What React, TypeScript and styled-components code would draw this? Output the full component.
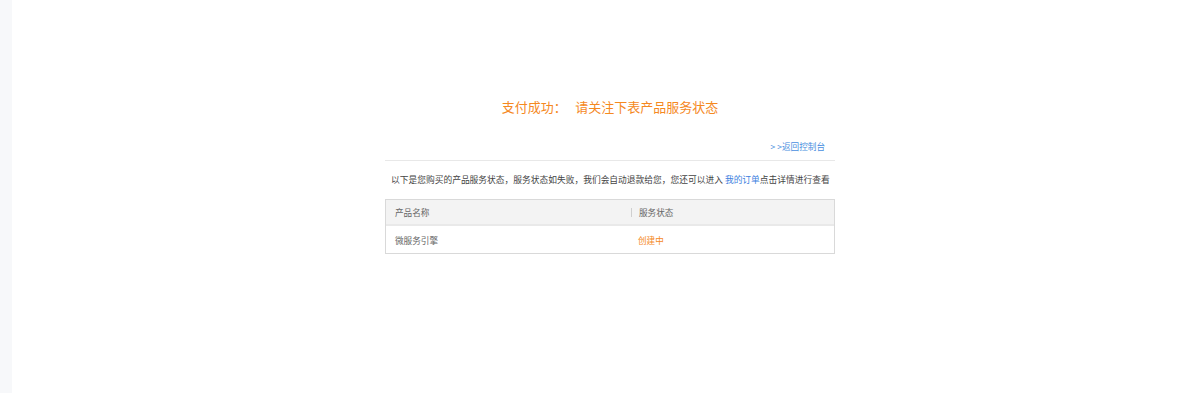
import styled, { createGlobalStyle } from 'styled-components'

const GlobalStyle = createGlobalStyle`
	html, body {
		margin: 0;
		padding: 0;
		background: #ffffff;
		font-family: 'Noto Sans CJK SC', 'Liberation Sans', sans-serif;
	}
`

const Page = styled.div`
	display: flex;
	width: 1198px;
	height: 393px;
	overflow: hidden;
`

const SideStrip = styled.div`
	width: 12px;
	flex-shrink: 0;
	background: #f7f8fa;
`

const Main = styled.div`
	flex: 1;
	display: flex;
	justify-content: center;
	padding-left: 10px;
`

const Content = styled.div`
	width: 450px;
	display: flex;
	flex-direction: column;
`

const Title = styled.h2`
	margin: 98px 0 0;
	font-size: 13px;
	line-height: 18px;
	font-weight: 400;
	color: #f5891f;
	text-align: center;
	white-space: pre;
`

const BackRow = styled.div`
	display: flex;
	justify-content: flex-end;
	padding: 24px 10px 8px 0;
	border-bottom: 1px solid #e8e8e8;
`

const BackLink = styled.a`
	font-size: 8.6px;
	line-height: 12px;
	color: #4a8fe0;
	text-decoration: none;
	cursor: pointer;
`

const Notice = styled.p`
	margin: 13px 0 0;
	padding-left: 6px;
	font-size: 8.74px;
	line-height: 12px;
	color: #444;
	white-space: nowrap;
`

const OrderLink = styled.a`
	color: #3e7fe0;
	text-decoration: none;
`

const Table = styled.div`
	margin-top: 13px;
	border: 1px solid #d9d9d9;
`

const Row = styled.div<{ $head?: boolean }>`
	display: grid;
	grid-template-columns: 243px 1fr;
	height: ${({ $head }) => ($head ? '24px' : '27px')};
	align-items: center;
	background: ${({ $head }) => ($head ? '#f3f3f3' : '#ffffff')};
	border-bottom: ${({ $head }) => ($head ? '2px solid #e9e9e9' : 'none')};
`

const Cell = styled.div<{ $divider?: boolean; $status?: boolean }>`
	position: relative;
	padding-left: ${({ $divider }) => ($divider ? '10px' : '9px')};
	font-size: 8.6px;
	line-height: 12px;
	color: ${({ $status }) => ($status ? '#f5891f' : '#666')};

	${({ $divider }) =>
		$divider &&
		`
		&::before {
			content: '';
			position: absolute;
			left: 2px;
			top: 2px;
			width: 1px;
			height: 9px;
			background: #cfcfcf;
		}
	`}
`

export default function App() {
	return (
		<>
			<GlobalStyle />
			<Page>
				<SideStrip />
				<Main>
					<Content>
						<Title>{'支付成功：   请关注下表产品服务状态'}</Title>
						<BackRow>
							<BackLink>{'> >返回控制台'}</BackLink>
						</BackRow>
						<Notice>
							以下是您购买的产品服务状态，服务状态如失败，我们会自动退款给您，您还可以进入{' '}
							<OrderLink>我的订单</OrderLink>点击详情进行查看
						</Notice>
						<Table>
							<Row $head>
								<Cell>产品名称</Cell>
								<Cell $divider>服务状态</Cell>
							</Row>
							<Row>
								<Cell>微服务引擎</Cell>
								<Cell $status>创建中</Cell>
							</Row>
						</Table>
					</Content>
				</Main>
			</Page>
		</>
	)
}
